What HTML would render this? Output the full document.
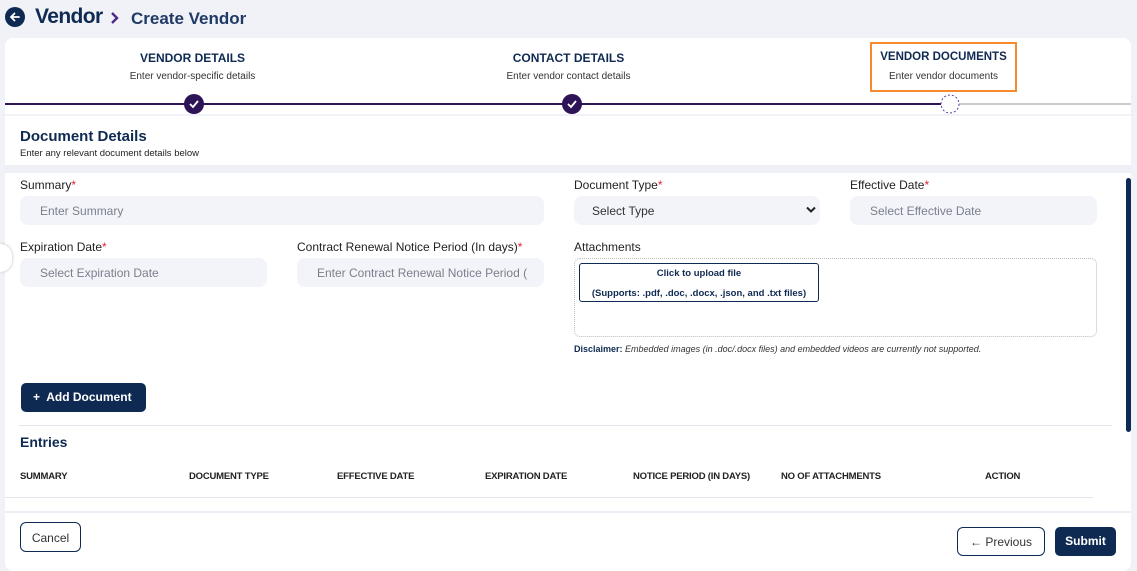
<!DOCTYPE html>
<html><head><style>
*{box-sizing:border-box;margin:0;padding:0}
body{width:1137px;height:571px;background:#f1f2f7;font-family:"Liberation Sans",sans-serif;position:relative;overflow:hidden;color:#1a1a2e}
.a{position:absolute}
.lbl{font-size:12px;color:#222}
.lbl b{color:#e0262b;font-weight:normal}
.inp{position:absolute;height:29px;background:#f3f4f9;border-radius:8px;font-size:12px;color:#7a7f8c;padding:8px 0 0 20px}
.th{position:absolute;top:471px;font-size:9.5px;font-weight:bold;color:#222;letter-spacing:-0.2px}
</style></head><body>
<svg class="a" style="left:5px;top:7px" width="20" height="20"><circle cx="10" cy="10" r="10" fill="#0f2a52"/><path d="M14 10H6M9.5 6.5L6 10l3.5 3.5" stroke="#fff" stroke-width="1.8" fill="none" stroke-linecap="round"/></svg>
<div class="a" style="left:35px;top:5px;font-size:21px;font-weight:bold;color:#0f2a52;letter-spacing:-0.6px">Vendor</div>
<svg class="a" style="left:110px;top:11px" width="10" height="14"><path d="M2 2l5 5-5 5" stroke="#4a2a8a" stroke-width="2.4" fill="none"/></svg>
<div class="a" style="left:131px;top:9px;font-size:17px;font-weight:bold;color:#1f3a66">Create Vendor</div>

<div class="a" style="left:5px;top:38px;width:1126px;height:533px;background:#fff;border-radius:8px"></div>
<div class="a" style="left:5px;top:51px;width:375px;text-align:center;font-size:12px;font-weight:bold;color:#0f2a52">VENDOR DETAILS</div>
<div class="a" style="left:5px;top:71px;width:375px;text-align:center;font-size:10px;color:#333">Enter vendor-specific details</div>
<div class="a" style="left:381px;top:51px;width:375px;text-align:center;font-size:12px;font-weight:bold;color:#0f2a52">CONTACT DETAILS</div>
<div class="a" style="left:381px;top:71px;width:375px;text-align:center;font-size:10px;color:#333">Enter vendor contact details</div>
<div class="a" style="left:870px;top:42px;width:147px;height:50px;border:2px solid #f58a2e"></div>
<div class="a" style="left:870px;top:51px;width:147px;text-align:center;font-size:11.5px;font-weight:bold;color:#0f2a52">VENDOR DOCUMENTS</div>
<div class="a" style="left:870px;top:71px;width:147px;text-align:center;font-size:10px;color:#333">Enter vendor documents</div>
<div class="a" style="left:5px;top:103px;width:940px;height:2px;background:#2d1457"></div>
<div class="a" style="left:955px;top:103px;width:176px;height:2px;background:#ccc"></div>
<svg class="a" style="left:184px;top:94px" width="20" height="20"><circle cx="10" cy="10" r="10" fill="#2d1457"/><path d="M6 10l3 3 5-6" stroke="#fff" stroke-width="1.8" fill="none"/></svg>
<svg class="a" style="left:562px;top:94px" width="20" height="20"><circle cx="10" cy="10" r="10" fill="#2d1457"/><path d="M6 10l3 3 5-6" stroke="#fff" stroke-width="1.8" fill="none"/></svg>
<svg class="a" style="left:940px;top:94px" width="20" height="20"><circle cx="10" cy="10" r="9" fill="#fff" stroke="#5b3a9a" stroke-dasharray="2 2"/></svg>

<div class="a" style="left:5px;top:114px;width:1126px;height:2px;background:#f1f2f7"></div>
<div class="a" style="left:20px;top:128px;font-size:15px;font-weight:bold;color:#0f2a52">Document Details</div>
<div class="a" style="left:20px;top:148px;font-size:9.5px;color:#222">Enter any relevant document details below</div>
<div class="a" style="left:5px;top:165px;width:1126px;height:8px;background:#eef0f6"></div>

<div class="a lbl" style="left:20px;top:178px">Summary<b>*</b></div>
<div class="inp" style="left:20px;top:196px;width:524px">Enter Summary</div>
<div class="a lbl" style="left:574px;top:178px">Document Type<b>*</b></div>
<div class="inp" style="left:574px;top:196px;width:246px;color:#333;padding-left:18px">Select Type<svg style="position:absolute;right:4px;top:10px" width="10" height="8"><path d="M1 1.5l4 4 4-4" stroke="#222" stroke-width="2" fill="none"/></svg></div>
<div class="a lbl" style="left:850px;top:178px">Effective Date<b>*</b></div>
<div class="inp" style="left:850px;top:196px;width:247px">Select Effective Date</div>
<div class="a lbl" style="left:20px;top:240px">Expiration Date<b>*</b></div>
<div class="inp" style="left:20px;top:258px;width:247px">Select Expiration Date</div>
<div class="a lbl" style="left:297px;top:240px">Contract Renewal Notice Period (In days)<b>*</b></div>
<div class="inp" style="left:297px;top:258px;width:247px;white-space:nowrap;overflow:hidden">Enter Contract Renewal Notice Period (</div>
<div class="a lbl" style="left:574px;top:240px">Attachments</div>
<div class="a" style="left:574px;top:258px;width:523px;height:79px;border:1px dotted #bbb;border-radius:6px"></div>
<div class="a" style="left:579px;top:263px;width:240px;height:39px;border:1px solid #0f2a52;border-radius:3px;text-align:center;font-size:9.5px;font-weight:bold;color:#0f2a52;line-height:20px">Click to upload file<br>(Supports: .pdf, .doc, .docx, .json, and .txt files)</div>
<div class="a" style="left:574px;top:344px;font-size:9px;color:#333"><b style="color:#0f2a52">Disclaimer:</b> <i>Embedded images (in .doc/.docx files) and embedded videos are currently not supported.</i></div>
<div class="a" style="left:0;top:244px;width:12px;height:28px;border-radius:0 14px 14px 0;background:#fff;box-shadow:0 0 3px #bbb"></div>

<div class="a" style="left:21px;top:383px;width:125px;height:29px;background:#0f2a52;border-radius:5px;color:#fff;font-size:12px;font-weight:bold;padding:7px 0 0 12px">+&nbsp; Add Document</div>
<div class="a" style="left:19px;top:425px;width:1093px;height:1px;background:#e4e5ec"></div>
<div class="a" style="left:20px;top:434px;font-size:14px;font-weight:bold;color:#0f2a52">Entries</div>
<div class="th" style="left:20px">SUMMARY</div>
<div class="th" style="left:189px">DOCUMENT TYPE</div>
<div class="th" style="left:337px">EFFECTIVE DATE</div>
<div class="th" style="left:485px">EXPIRATION DATE</div>
<div class="th" style="left:633px">NOTICE PERIOD (IN DAYS)</div>
<div class="th" style="left:781px">NO OF ATTACHMENTS</div>
<div class="th" style="left:985px">ACTION</div>
<div class="a" style="left:5px;top:497px;width:1088px;height:1px;background:#e4e5ec"></div>
<div class="a" style="left:1126px;top:178px;width:5px;height:254px;background:#0f2a52;border-radius:3px"></div>
<div class="a" style="left:5px;top:511px;width:1126px;height:2px;background:#eceef5"></div>

<div class="a" style="left:20px;top:522px;width:61px;height:30px;border:1px solid #0f2a52;border-radius:6px;font-size:12px;color:#333;text-align:center;padding-top:8px">Cancel</div>
<div class="a" style="left:957px;top:527px;width:88px;height:29px;border:1px solid #0f2a52;border-radius:6px;font-size:12px;color:#333;text-align:center;padding-top:7px">← Previous</div>
<div class="a" style="left:1055px;top:527px;width:61px;height:29px;background:#0f2a52;border-radius:5px;font-size:12px;font-weight:bold;color:#fff;text-align:center;padding-top:7px">Submit</div>
</body></html>
